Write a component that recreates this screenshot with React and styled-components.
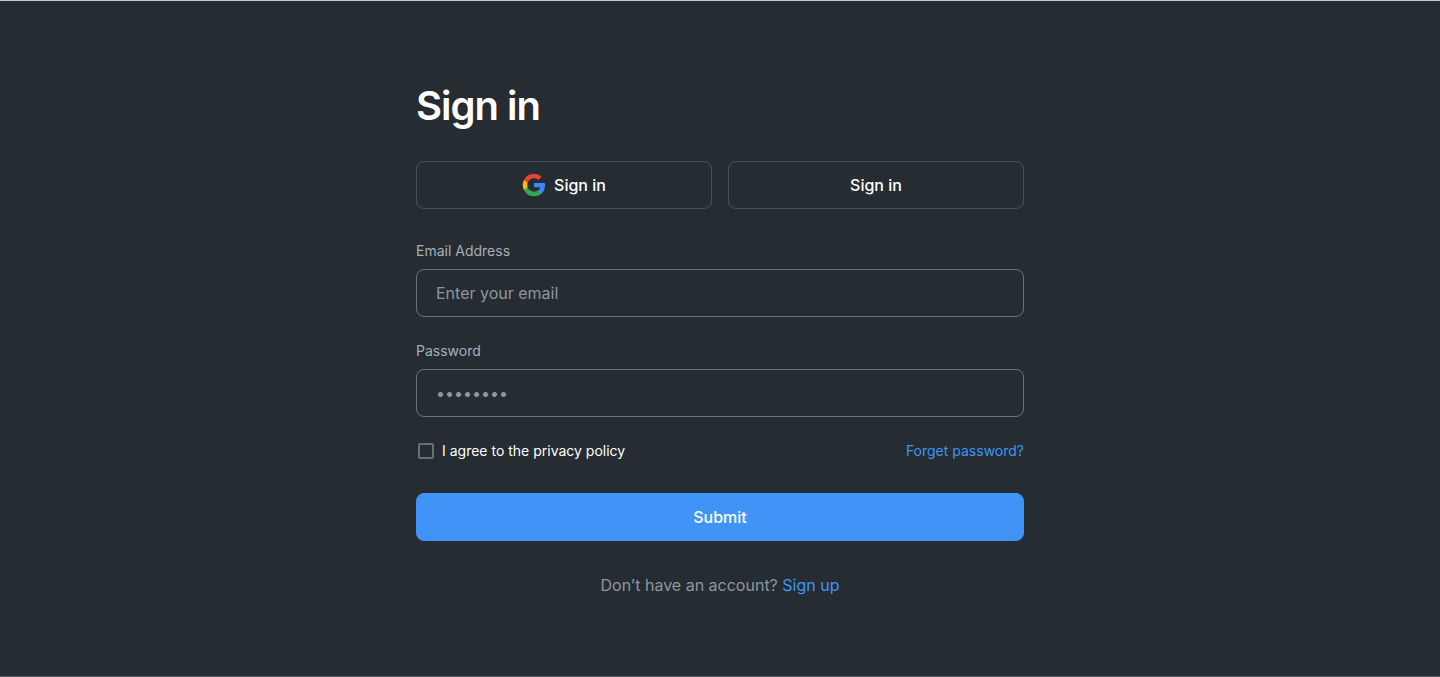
import React from "react";
import styled, { createGlobalStyle } from "styled-components";

const GlobalStyle = createGlobalStyle`
  *, *::before, *::after { box-sizing: border-box; }
  body {
    margin: 0;
    background: #252c32;
    color: #ffffff;
    font-family: Inter, "Liberation Sans", sans-serif;
    font-size: 16px;
    line-height: 24px;
  }
  button, input { font: inherit; color: inherit; }
`;

const Page = styled.main`
  display: flex;
  flex-direction: column;
  align-items: center;
  min-height: 100vh;
  padding: 80px 16px 64px;
  border-top: 1px solid #bccbd2;
  border-bottom: 1px solid #59616a;
`;

const Form = styled.form`
  display: flex;
  flex-direction: column;
  width: 100%;
  max-width: 608px;
`;

const Title = styled.h1`
  margin: 0 0 30px;
  font-size: 40px;
  line-height: 50px;
  font-weight: 600;
  letter-spacing: -1px;
`;

const Providers = styled.div`
  display: grid;
  grid-template-columns: 1fr 1fr;
  gap: 16px;
  margin-bottom: 32px;
`;

const Button = styled.button`
  display: flex;
  align-items: center;
  justify-content: center;
  gap: 8px;
  height: 48px;
  padding: 0 16px;
  border: 1px solid ${(p) => (p.$primary ? "#4094f7" : "#4b525a")};
  border-radius: 8px;
  background: ${(p) => (p.$primary ? "#4094f7" : "transparent")};
  font-weight: 500;
  cursor: pointer;
`;

const Field = styled.div`
  display: flex;
  flex-direction: column;
  gap: 8px;
  margin-bottom: 24px;
`;

const Label = styled.label`
  color: #a9afb6;
  font-size: 14px;
  line-height: 20px;
`;

const TextInput = styled.input`
  width: 100%;
  height: 48px;
  padding: 0 19px;
  border: 1px solid #6b737c;
  border-radius: 8px;
  background: transparent;
  &::placeholder {
    color: #8f969e;
    opacity: 1;
  }
`;

const Options = styled.div`
  display: flex;
  align-items: center;
  justify-content: space-between;
  margin-bottom: 32px;
  font-size: 14px;
  line-height: 20px;
`;

const Agreement = styled.label`
  display: flex;
  align-items: center;
  gap: 8px;
  padding-left: 2px;
`;

const Checkbox = styled.input`
  appearance: none;
  width: 16px;
  height: 16px;
  margin: 0;
  border: 2px solid #666e77;
  border-radius: 2px;
  &:checked { background: #4094f7; }
`;

const Link = styled.a`
  color: #4094f7;
  text-decoration: none;
`;

const Footer = styled.p`
  margin: 32px 0 0;
  color: #8f969e;
  text-align: center;
`;

const GoogleLogo = () => (
  <svg width="24" height="24" viewBox="0 0 24 24" aria-hidden="true">
    <path fill="#4285F4" d="M23 12.25c0-.78-.07-1.53-.2-2.25H12v4.26h6.16a5.26 5.26 0 0 1-2.28 3.45v2.86h3.69C21.73 18.58 23 15.68 23 12.25z" />
    <path fill="#34A853" d="M12 23.2c3.08 0 5.67-1.02 7.57-2.76l-3.69-2.86c-1.02.69-2.33 1.09-3.88 1.09-2.98 0-5.5-2.01-6.4-4.72H1.99v2.96A11.2 11.2 0 0 0 12 23.2z" />
    <path fill="#FBBC05" d="M5.6 14.08a6.8 6.8 0 0 1 0-4.26V6.96H1.99a11.2 11.2 0 0 0 0 10.08z" />
    <path fill="#EA4335" d="M12 5.3c1.68 0 3.19.58 4.38 1.71l3.28-3.28A11.1 11.1 0 0 0 12 .8 11.2 11.2 0 0 0 1.99 6.96L5.6 9.92C6.5 7.21 9.02 5.3 12 5.3z" />
  </svg>
);

export default function App() {
  return (
    <>
      <GlobalStyle />
      <Page>
        <Form onSubmit={(e) => e.preventDefault()}>
          <Title>Sign in</Title>
          <Providers>
            <Button type="button">
              <GoogleLogo />
              Sign in
            </Button>
            <Button type="button">Sign in</Button>
          </Providers>
          <Field>
            <Label htmlFor="email">Email Address</Label>
            <TextInput id="email" type="email" placeholder="Enter your email" />
          </Field>
          <Field>
            <Label htmlFor="password">Password</Label>
            <TextInput id="password" type="password" placeholder="••••••••" />
          </Field>
          <Options>
            <Agreement htmlFor="privacy">
              <Checkbox id="privacy" type="checkbox" />
              I agree to the privacy policy
            </Agreement>
            <Link href="#forgot">Forget password?</Link>
          </Options>
          <Button type="submit" $primary>Submit</Button>
          <Footer>
            Don’t have an account? <Link href="#signup">Sign up</Link>
          </Footer>
        </Form>
      </Page>
    </>
  );
}
